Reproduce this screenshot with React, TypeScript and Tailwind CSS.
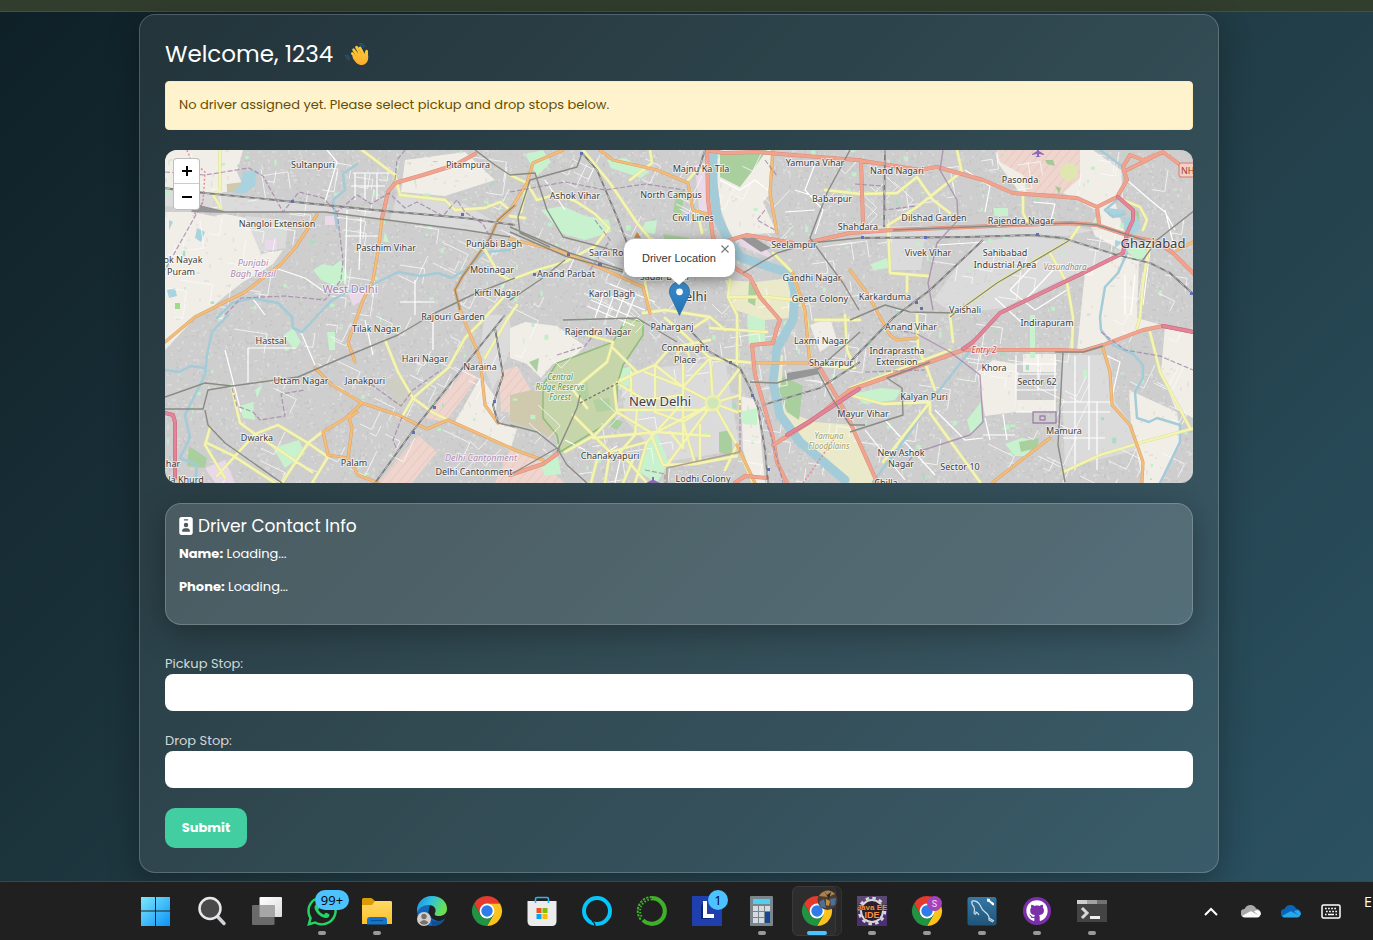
import type { ReactNode } from "react";
import { FaIdBadge } from "react-icons/fa6";
import { FaWhatsapp, FaGithub } from "react-icons/fa";

const noise = (() => {
  let seed = 20240611;
  const rnd = () => {
    seed = (seed * 1664525 + 1013904223) % 4294967296;
    return seed / 4294967296;
  };
  let dark = "";
  let light = "";
  let streets = "";
  let sand = "";
  for (let i = 0; i < 11000; i++) {
    const x = Math.round(rnd() * 1028);
    const y = Math.round(rnd() * 333);
    const l = 1 + Math.round(rnd() * 3);
    const seg = `M${x} ${y}${rnd() > 0.5 ? "h" : "v"}${l}`;
    if (i % 2 === 0) light += seg;
    else dark += seg;
  }
  for (let i = 0; i < 1100; i++) {
    const x = Math.round(rnd() * 1028);
    const y = Math.round(rnd() * 333);
    sand += `M${x} ${y}${rnd() > 0.5 ? "h" : "v"}${2 + Math.round(rnd() * 3)}`;
  }
  for (let i = 0; i < 260; i++) {
    const x = Math.round(rnd() * 1028);
    const y = Math.round(rnd() * 333);
    const a = Math.round((x / 260 + y / 200) % 3) * 0.3 - 0.15;
    const l = 10 + rnd() * 24;
    const b = rnd() > 0.5 ? a : a + Math.PI / 2;
    const c = b + Math.PI / 2;
    streets += `M${x} ${y}l${(Math.cos(b) * l).toFixed(1)} ${(Math.sin(b) * l).toFixed(1)}`;
    streets += `l${(Math.cos(c) * l * 0.6).toFixed(1)} ${(Math.sin(c) * l * 0.6).toFixed(1)}`;
  }
  const parks: { x: number; y: number; w: number; h: number }[] = [];
  for (let i = 0; i < 240; i++) {
    parks.push({ x: rnd() * 1020, y: rnd() * 330, w: 1 + rnd() * 4, h: 1 + rnd() * 5 });
  }
  return { dark, light, streets, sand, parks };
})();

const openLand = [
  "M0 0H78L72 22 80 40 60 42 48 44 30 40 0 38Z",
  "M0 62H26L48 66 60 64 92 70 96 104 118 100 108 114 92 124 78 132 60 146 44 160 30 168 0 200Z",
  "M548 0H606L604 45 598 52 612 83 585 84 566 88 556 60Z",
  "M832 0H928L956 20 958 48 934 62 912 50 898 43 855 43 832 12Z",
  "M934 62L950 52 960 84 956 100 930 86 926 76Z",
  "M858 204H891V222H858ZM852 250H890V262H852Z",
  "M920 122L962 104 974 110 972 168 1000 176 960 186 938 194 912 200Z",
  "M1000 176L1028 182V268L1010 258 996 222Z",
  "M964 240L1012 262 1016 290 996 333H978L966 275Z",
  "M345 178L360 172 392 176 420 196 410 206 388 214 376 228 362 214 345 208Z",
  "M316 226L332 250 330 272 352 279 345 300 290 272Z",
  "M812 222L828 210 852 214 850 262 820 266Z",
  "M576 246L592 250 600 333H588L578 300Z",
  "M240 10L300 2 330 30 280 46 236 42Z",
  "M645 175L665 168 672 190 655 202Z",
];

const greyLand = [
  "M0 40L120 52 218 62 216 70 160 62 60 61 30 58 0 56Z",
  "M80 66L124 70 120 98 95 102Z",
  "M810 92L858 86 898 90 952 106 900 128 838 158 790 164 768 150Z",
  "M233 42L300 54 330 72 320 84 225 70Z",
  "M696 76L905 76 930 80 902 86 800 86 698 86Z",
  "M720 84L760 86 756 120 726 120Z",
  "M896 205H945L950 252 968 276 972 300 900 318Z",
  "M320 165H345V200L328 240 314 205Z",
  "M455 222L560 210 575 300 500 312 460 270Z",
];

const pinkLand = [
  "M832 0H915V28L898 43H862L858 25 835 12Z",
  "M300 219L313 228 280 272 260 268Z",
  "M253 285L272 302 247 333H213Z",
  "M334 222L352 216 368 244 352 262 336 262Z",
  "M345 300L376 312 400 333H330Z",
];

const lightGreen = [
  "M148 120L158 114 168 116 176 110 180 120 184 128 170 136 156 130Z",
  "M376 60L398 56 420 66 444 70 446 82 420 90 398 84Z",
  "M360 4L378 0 386 12 372 26Z",
  "M442 10L460 8 484 22 476 28 446 18Z",
  "M108 298L134 290 140 304 120 318Z",
  "M482 290L492 284 504 312 492 333 474 322Z",
  "M582 165H600V195H584Z",
  "M574 262L592 258 592 275 578 274Z",
  "M686 244L716 238 736 240 730 250 700 254Z",
  "M840 294L856 288 870 290 862 306 850 306Z",
  "M962 100L975 94 986 106 970 110Z",
  "M452 220L466 216 466 234 454 240Z",
  "M802 270L816 252 818 270 806 284Z",
  "M480 72L492 70 490 84 476 82Z",
  "M374 312L392 302 396 324 380 326Z",
  "M90 240L98 234 92 248ZM74 256L88 252 90 270 78 268Z",
  "M128 178L136 192 130 200 118 186ZM162 182H170V200H164ZM220 82L224 92 218 92ZM706 114L722 108 724 118 708 120ZM828 58H843V66H830ZM918 220H922V228H918ZM865 165H870V208H865Z",
];

const midGreen = [
  "M555 2L602 0 588 20 575 37 555 27Z",
  "M512 42L520 40 516 66 508 62Z",
  "M498 84L524 88 530 98 502 96Z",
  "M554 282L566 280 568 308 554 302Z",
  "M964 57L974 62 974 72 968 68Z",
  "M854 292L874 288 872 298 856 302Z",
  "M24 296L42 308 40 318 22 316Z",
  "M448 268L458 272 452 280 444 276Z",
  "M364 212L374 208 372 222Z",
];

const river = "M548 -4L548 33 552 67 562 87 575 107 605 117 625 123 630 143 628 170 612 198 608 232 615 265 635 292 680 330";

const streams = [
  "M63 165L47 182 42 205 40 225 20 265 25 288 15 308 32 315 30 333",
  "M0 220L14 222 26 216 40 218",
  "M52 168L67 153 87 148 113 153 127 167 128 178 137 182 153 165 167 150 187 140 207 135 233 122 255 126 273 123 287 128 300 120 320 102 345 100",
  "M172 78L168 50 180 40 178 24 192 14",
  "M935 0L958 17 960 33 952 50 940 60 948 67 960 64",
  "M962 103L953 123 940 137 935 167 936 180 948 195 968 204 978 215 978 228 970 242 972 268 984 272 992 268 1015 275 1015 292 995 333",
  "M808 197L765 252 738 292 708 332",
];

const yellowRoads = [
  "M55 0V40L48 45 56 58",
  "M197 0L230 25 235 45 280 50 290 60 320 58 335 52 345 60",
  "M418 0L445 33 472 73 492 97",
  "M485 0L487 13 465 30",
  "M523 30L530 22 545 18",
  "M532 60L537 83",
  "M608 103L628 123 642 170 645 215",
  "M345 25L362 33 372 50 392 44 412 52 430 64 444 78 430 96 400 112 372 120 345 130",
  "M360 68L345 66M362 33L356 62",
  "M792 0L797 23",
  "M660 40L696 44 732 43 752 27 768 50 785 63",
  "M725 123L723 75 752 57 795 23",
  "M858 45V63L863 73",
  "M915 75L905 90 870 110 832 133 785 167",
  "M958 50L975 57 982 70 978 80",
  "M985 90L978 133 975 167 972 178",
  "M885 103L902 133 908 167 907 198",
  "M725 123L763 126M742 126V142",
  "M685 245L718 254 765 252",
  "M765 252L765 263 815 332",
  "M752 165L753 198 762 218 770 240",
  "M718 312L765 252",
  "M785 165L788 192M685 238L785 200",
  "M898 322L935 305 978 292 1030 278",
  "M985 182L995 222 1025 278",
  "M67 238L75 273 90 284 113 275 143 293 163 307 147 333",
  "M45 278L40 295 60 328M42 293L67 305 110 333",
  "M90 284L52 326M90 284L147 322M157 282L143 293 117 333",
  "M220 190L233 222 248 248 267 262 283 270",
  "M237 267L248 248 283 218 300 188 316 172 345 140",
  "M320 208L343 168 352 155",
  "M320 100L334 124 345 130",
  "M400 302L430 285 452 262 449 235 472 222 448 198",
  "M408 265L445 302 440 333",
  "M422 258L408 240 442 212 448 192 422 185",
  "M452 260H548M518 237L548 253M518 212V298M518 237L545 208M548 253L545 208M548 253L575 218M548 253L575 245",
  "M548 253L572 262M548 253L572 295M548 253L502 315M518 237L490 215 455 230M490 215L505 198 545 190",
  "M492 282L548 253M482 292L518 252M452 262L485 282 498 315 530 314 572 306",
  "M455 235L480 250 518 245M518 237L480 222M518 272L490 262M492 282L545 286M530 314L518 272 548 253",
  "M428 288L492 282M445 302L482 292M466 245V222M472 260L470 285 455 302M535 312V275M572 295L560 320M575 225V262",
  "M490 215V262M455 302L482 333M434 302L426 333M482 292L470 333M518 298L505 282",
  "M572 165V215M545 178L602 182M525 180L545 167M500 168L520 185 545 208 588 213",
  "M478 163L500 160 545 167 560 180",
  "M565 130L563 147 572 165M563 147L602 147 630 150",
  "M492 97L480 132 485 163",
  "M680 165L682 200 690 218M645 215L690 218M650 170H695",
  "M458 333L470 305M572 295L588 333",
];

const orangeRoads = [
  "M0 192L30 167 80 142 115 115 130 98 152 65",
  "M217 68L214 95 208 130 198 150 192 167 183 192 190 212",
  "M150 218L167 235 197 253 233 265 262 279 283 270 350 300 378 310",
  "M197 253L182 267 158 282 163 305 183 308 187 278 184 268 192 262",
  "M183 308L193 325 213 333",
  "M435 0L448 10 492 20 523 33 528 60 545 65",
  "M398 0L368 13 362 33 345 60 333 72",
  "M345 89L395 101 445 122 478 137 485 163",
  "M588 213H645",
  "M937 195L945 222 947 255 965 275 978 312 977 332",
  "M828 332L885 288",
  "M608 0L605 43 612 83",
  "M685 120L702 143 715 167 725 185 732 190 752 188",
  "M628 123L640 160 645 215",
  "M1028 92L1012 100",
  "M350 55L333 70 325 88 297 127 290 140 295 160 300 172 315 208 320 255 333 273",
  "M572 295L590 333",
];

const salmonRoads = [
  "M310 4L290 15 258 25 230 33 223 42 217 68",
  "M542 0L543 50 548 88 568 117 585 127 595 147 615 170 612 178 608 193 587 195 590 225 598 252 608 288 612 312 622 333",
  "M542 0L558 3 592 2 628 5 692 10 755 20 772 17 818 30 848 43 912 48 932 57 952 47 962 30 958 17 965 5 978 10 998 2 1018 17",
  "M962 20L998 2M932 57L934 73M696 10L698 73",
  "M548 98L565 90 582 85 628 93M685 83L728 80 905 73 932 75 968 87 992 92 1008 103 1030 125",
  "M685 83L645 92",
  "M645 213L655 218 678 258 685 272 712 332",
  "M798 200H892L918 201 938 195 978 180 998 176 1030 182",
  "M798 200L765 212 685 240 645 272 608 295",
  "M345 325L378 314 392 304",
  "M570 333L580 326 602 328",
];

const pinkRoads = [
  "M953 47L968 60 968 70 962 83 958 103 918 123 835 163 808 192 798 199",
  "M0 263L8 265 10 272V328",
  "M694 239L645 271 622 285",
  "M998 176L1028 182",
];

const railGrey = [
  "M30 55L60 62 160 62 230 71 300 80 345 87",
  "M310 0L330 15 345 25 370 23 382 60 398 87 448 100",
  "M417 3L412 17 365 30 353 67 355 83 385 97",
  "M345 77L405 103 458 120M345 82L400 106 458 122",
  "M350 128L307 145 270 163 233 185 177 208 133 227 67 236 40 233 0 247",
  "M0 259H38L43 240 67 236M40 260L43 275 60 293 117 333",
  "M685 0L662 43 645 88 678 133 694 160",
  "M578 123L612 103 645 93 695 88",
  "M728 80L905 73 932 75 985 92",
  "M345 150L375 130 400 110",
  "M1030 60L992 90 978 110",
  "M898 202L893 295 900 332M890 202L918 202 938 196",
  "M685 282L738 265 737 238 722 228 765 212",
  "M345 275L372 282 392 298 402 315 422 333M392 298L345 325",
  "M398 170L472 168 512 192M392 302L412 258 415 245",
  "M585 232L612 233 652 220 695 182",
  "M350 55L333 70 325 88 297 127 290 140 295 160",
  "M333 273L350 277M330 178L338 225 328 255 333 273",
  "M905 90L832 133 785 167",
  "M685 170L720 155 745 162 790 163",
  "M652 220L668 250 685 275 700 275",
];

const railDark = [
  "M0 38L20 41 120 51 220 61 300 68 350 75",
  "M417 3L432 20 452 67 462 93",
  "M340 165L300 215 247 282 210 333",
  "M695 88L802 87 868 85 898 88 952 105 985 113 1005 123 1027 143",
  "M818 90L765 140 728 168 685 212",
  "M720 0L719 77",
  "M525 180L545 202 575 218 585 238 593 258 600 300 603 333",
  "M598 255L655 238 695 212",
  "M540 0L532 25",
  "M330 178L338 225 328 255 333 273",
];

const borders = [
  "M0 22L40 25 84 18 98 26 118 62 134 42 158 48 172 62 192 45 206 54 224 43 240 58 252 52 278 66 292 50 300 62 318 74 330 96",
  "M345 42L400 32 440 40 480 34 520 40",
  "M172 62L178 110 176 130 160 150 120 146 76 148 60 165",
  "M38 52L0 120",
  "M230 30L232 10 240 0",
  "M67 238L72 256 88 262 95 270 120 266 116 244 140 240",
  "M237 267L228 290 232 300",
  "M200 230L236 256 248 240 276 220",
  "M690 34L718 36 720 60 750 56",
  "M732 180L752 184M752 302L735 320",
  "M600 10L612 26M600 60L592 70 610 80",
  "M936 182L960 200 995 206 1028 220",
  "M425 120L445 90 430 70",
  "M392 205L420 196 432 180",
  "M700 222L760 220",
  "M592 250L606 285 618 333",
  "M480 320L500 324 500 333M575 302L575 250",
];

type MapLabel = { t: string; x: number; y: number; city?: boolean };
const labels: MapLabel[] = [
  { t: "Sultanpuri", x: 148, y: 18 },
  { t: "Pitampura", x: 303, y: 18 },
  { t: "Nangloi Extension", x: 112, y: 77 },
  { t: "Paschim Vihar", x: 221, y: 101 },
  { t: "Punjabi Bagh", x: 329, y: 97 },
  { t: "Motinagar", x: 327, y: 123 },
  { t: "Kirti Nagar", x: 332, y: 146 },
  { t: "ok Nayak", x: 18, y: 113 },
  { t: "Puram", x: 16, y: 125 },
  { t: "Rajouri Garden", x: 288, y: 170 },
  { t: "Tilak Nagar", x: 211, y: 182 },
  { t: "Hastsal", x: 106, y: 194 },
  { t: "Hari Nagar", x: 260, y: 212 },
  { t: "Naraina", x: 315, y: 220 },
  { t: "Uttam Nagar", x: 136, y: 234 },
  { t: "Janakpuri", x: 200, y: 234 },
  { t: "Dwarka", x: 92, y: 291 },
  { t: "Palam", x: 189, y: 316 },
  { t: "Delhi Cantonment", x: 309, y: 325 },
  { t: "har", x: 8, y: 317 },
  { t: "la Khurd", x: 21, y: 333 },
  { t: "Majnu Ka Tila", x: 536, y: 22 },
  { t: "Yamuna Vihar", x: 650, y: 16 },
  { t: "Ashok Vihar", x: 410, y: 49 },
  { t: "North Campus", x: 506, y: 48 },
  { t: "Civil Lines", x: 528, y: 71 },
  { t: "Babarpur", x: 667, y: 52 },
  { t: "Shahdara", x: 693, y: 80 },
  { t: "Seelampur", x: 629, y: 98 },
  { t: "Sarai Rohilla", x: 450, y: 106 },
  { t: "Sadar Bazar", x: 500, y: 130 },
  { t: "Anand Parbat", x: 401, y: 127 },
  { t: "Karol Bagh", x: 447, y: 147 },
  { t: "Gandhi Nagar", x: 647, y: 131 },
  { t: "Geeta Colony", x: 655, y: 152 },
  { t: "Nand Nagari", x: 732, y: 24 },
  { t: "Pasonda", x: 855, y: 33 },
  { t: "Dilshad Garden", x: 769, y: 71 },
  { t: "Rajendra Nagar", x: 856, y: 74 },
  { t: "Vivek Vihar", x: 763, y: 106 },
  { t: "Sahibabad", x: 840, y: 106 },
  { t: "Industrial Area", x: 840, y: 118 },
  { t: "Karkarduma", x: 720, y: 150 },
  { t: "Vaishali", x: 800, y: 163 },
  { t: "Rajendra Nagar", x: 433, y: 185 },
  { t: "Paharganj", x: 507, y: 180 },
  { t: "Connaught", x: 520, y: 201 },
  { t: "Place", x: 520, y: 213 },
  { t: "Laxmi Nagar", x: 656, y: 194 },
  { t: "Shakarpur", x: 666, y: 216 },
  { t: "Anand Vihar", x: 746, y: 180 },
  { t: "Indraprastha", x: 732, y: 204 },
  { t: "Extension", x: 732, y: 215 },
  { t: "Indirapuram", x: 882, y: 176 },
  { t: "Khora", x: 829, y: 221 },
  { t: "Sector 62", x: 872, y: 235 },
  { t: "Kalyan Puri", x: 759, y: 250 },
  { t: "Mayur Vihar", x: 698, y: 267 },
  { t: "Mamura", x: 899, y: 284 },
  { t: "New Ashok", x: 736, y: 306 },
  { t: "Nagar", x: 736, y: 317 },
  { t: "Sector 10", x: 795, y: 320 },
  { t: "Chilla", x: 721, y: 336 },
  { t: "Chanakyapuri", x: 445, y: 309 },
  { t: "Lodhi Colony", x: 538, y: 332 },
  { t: "Delhi", x: 526, y: 151, city: true },
  { t: "New Delhi", x: 495, y: 256, city: true },
  { t: "Ghaziabad", x: 988, y: 98, city: true },
];

const italics = [
  { t: "Punjabi", x: 88, y: 116, c: "#b08bb4", s: 9 },
  { t: "Bagh Tehsil", x: 88, y: 127, c: "#b08bb4", s: 9 },
  { t: "Delhi Cantonment", x: 316, y: 311, c: "#b08bb4", s: 9 },
  { t: "Central", x: 395, y: 230, c: "#4f9a4c", s: 8 },
  { t: "Ridge Reserve", x: 395, y: 240, c: "#4f9a4c", s: 8 },
  { t: "Forest", x: 395, y: 250, c: "#4f9a4c", s: 8 },
  { t: "Yamuna", x: 664, y: 289, c: "#a09f62", s: 8 },
  { t: "Floodplains", x: 664, y: 299, c: "#a09f62", s: 8 },
  { t: "Vasundhara", x: 900, y: 120, c: "#8c8c8c", s: 8 },
  { t: "Entry 2", x: 819, y: 203, c: "#c8465a", s: 8 },
];

function Roads({ d, casing, fill, w }: { d: string[]; casing: string; fill: string; w: number }) {
  return (
    <g fill="none" strokeLinejoin="round" strokeLinecap="round">
      <path d={d.join("")} stroke={casing} strokeWidth={w + 1} />
      <path d={d.join("")} stroke={fill} strokeWidth={w} />
    </g>
  );
}

function CityMap() {
  return (
    <svg viewBox="0 0 1028 333" preserveAspectRatio="xMidYMid slice" className="block h-full w-full" role="img" aria-label="Map of Delhi">
      <defs>
        <pattern id="hatch" width="7" height="7" patternUnits="userSpaceOnUse" patternTransform="rotate(40)">
          <path d="M0 0V7" stroke="#e6b9b2" strokeWidth="1" />
        </pattern>
      </defs>
      <rect width="1028" height="333" fill="#cecece" />
      <path d={noise.dark} stroke="#c2c2c2" fill="none" />
      <path d={noise.light} stroke="#e0e0df" fill="none" />
      <path d={openLand.join("")} fill="#f1eee8" />
      <path d={greyLand.join("")} fill="#dbdbdb" />
      <path d={noise.sand} stroke="#cfccc8" strokeWidth="1" opacity=".6" fill="none" />
      <path d={pinkLand.join("")} fill="#eed6cf" />
      <path d={pinkLand.join("")} fill="url(#hatch)" />
      <path d="M345 245L375 238 390 290 372 280 345 272ZM62 34L78 32 76 42 62 42Z" fill="#cfc9ae" />
      <path d="M222 230L240 226 244 248 236 256 222 240Z" fill="#d0cebf" opacity=".8" />
      <path d="M182 140L206 134 200 148 188 156ZM100 90L112 90 112 100 100 100ZM160 66L170 66 170 75 160 75ZM530 15L542 12 543 62 534 60ZM610 110L575 96 572 88 600 98ZM50 333L40 318 60 310 70 333Z" fill="#ead9e8" />
      {noise.parks.map((p, i) => (
        <rect key={i} x={p.x} y={p.y} width={p.w} height={p.h} fill={i % 6 === 0 ? "#a9dcc0" : "#c0f0c8"} />
      ))}
      <path d={lightGreen.join("")} fill="#c8f2cd" />
      <path d={midGreen.join("")} fill="#aacf9f" />
      <path d="M618 205L616 250 622 262 650 272 690 275 712 333H684L640 294 612 262 604 232 606 205ZM560 130L590 132 625 128 626 168 600 170 570 160Z" fill="#eae9c9" />
      <path d="M584 132L592 134 590 156 583 152ZM618 226L638 236 634 270 622 262 614 240Z" fill="#aacf9f" />
      <path d="M378 235L392 213 422 202 448 192 462 168 478 172 478 185 458 215 452 235V262L435 278 395 302 392 285 378 268Z" fill="#c7d5aa" stroke="#8dbd77" strokeWidth="1.5" />
      <path d="M412 240L422 232 424 246 414 258ZM428 250L444 248 446 260 432 262Z" fill="#b1d2a0" />
      <circle cx="904" cy="22" r="9" fill="#dfe6b0" />
      <path d="M880 10L888 10 890 16 882 14ZM890 36L896 38 894 44Z" fill="#a5c894" />
      <path d="M78 22L92 20 90 36 78 44 68 42 76 34ZM2 140L10 138 12 146 4 148ZM32 78L40 82 36 92 30 88ZM4 70L8 72 4 80ZM958 68L972 66 976 78 966 86 960 82ZM942 58L960 60 956 68 944 66ZM950 90L958 92 950 98Z" fill="#a9d3de" />
      <path d="M10 153H15V159H10Z" fill="#9fdc8a" />
      <path d={noise.streets} fill="none" stroke="#fbfbfb" strokeWidth=".9" opacity=".85" />
      <path
        fill="none"
        stroke="#fff"
        strokeWidth="1.2"
        d="M851 205V262L890 262V205M851 214H892M851 224H892M851 240H892M873 205V240M162 0L172 12 160 52M188 23H230M190 23V50M200 23V50M212 23V50M186 36H220M182 60L180 134M196 66L194 120M180 86H214M110 118L140 128 160 142M88 149L100 165M136 182L150 215M83 198H130M83 198L83 232M60 200L76 262M200 170L208 205M235 152H270M250 130V165M268 165V200M380 30L400 60M440 140L430 168M450 142L440 170M460 144L450 170M430 140L480 160M426 150L474 170M422 156L470 176M445 134L490 152M470 146L458 176M910 206V320M924 206V300M932 252V320M896 252H945M896 262H945M898 288H940M700 280L740 330M720 270L770 325M740 292L720 306M770 260L800 290 818 288M820 268L825 290M838 264L842 290M818 285H850M985 100L978 155M960 125V165M970 125L966 165M1000 60L1010 100M868 52L890 54 886 70M800 20L825 36 820 62M772 95L820 92M845 140L875 108M860 150L890 118M870 160L905 138M845 140L870 160M830 148L856 172M650 14L640 40 658 60 650 84M630 40L660 50M620 62L650 60M555 30L575 40 590 30 603 40M940 205L955 212 945 255M962 30L985 50 1000 62 1010 80M400 290L420 300M430 310L452 296M455 310L450 333"
      />
      <g fill="none" stroke="#a3cbd8" strokeLinejoin="round" strokeLinecap="round">
        <path d={river} strokeWidth="9" />
        <path d={streams.join("")} strokeWidth="2.5" />
      </g>
      <Roads d={yellowRoads} casing="#dfdf9d" fill="#f4f5b2" w={2.3} />
      <Roads d={orangeRoads} casing="#d9a566" fill="#f5bd7c" w={2.2} />
      <Roads d={salmonRoads} casing="#dc8c78" fill="#f0a48f" w={3} />
      <Roads d={pinkRoads} casing="#c9667e" fill="#e18598" w={3} />
      <g fill="none" strokeLinejoin="round">
        <path d={railGrey.join("")} stroke="#8b8b85" strokeWidth="1.4" />
        <path d={railDark.join("")} stroke="#7d7d7d" strokeWidth="1.8" />
        <path d={railDark.join("")} stroke="#c9c9c9" strokeWidth=".9" strokeDasharray="5 5" />
        <path d={borders.join("")} stroke="#a183a8" strokeWidth="1.2" strokeDasharray="5 2" opacity=".8" />
        <path d="M778 0L775 20 792 50 793 70 772 93 763 133 768 160M752 184L785 202 815 225 818 272 805 285 752 302" stroke="#a183a8" strokeWidth="1.4" opacity=".75" />
        <path d="M868 262H891V273H868ZM875 266H880V270H875Z" stroke="#a183a8" strokeWidth="1.4" />
        <path d="M575 302L502 318V333" stroke="#b0a28a" strokeWidth="1.5" />
        <path d="M415 253L455 232" stroke="#777" strokeDasharray="3 2" strokeWidth="1.3" />
        <path d="M22 0L26 10 40 22 38 52 28 66M638 333L672 285" stroke="#e58a98" strokeWidth="1.5" strokeDasharray="2 2" />
      </g>
      <path d="M30 54L50 60 60 63 26 62ZM576 88L590 88 606 98 596 102 584 94ZM622 223L652 218 654 224 622 231Z" fill="#969696" />
      <g fill="none" stroke="#eef0a8" strokeWidth="2.5">
        <circle cx="548" cy="253" r="7" fill="#cfe6bb" />
        <circle cx="518" cy="206" r="6" />
      </g>
      <path d="M126 50h3v3h-3zM296 63h3v3h-3zM415 2h3v3h-3zM402 103h3v3h-3zM433 113h4v3h-4zM368 123h3v3h-3zM328 250h3v3h-3zM268 256h3v3h-3zM247 281h3v3h-3zM696 86h3v3h-3zM759 86h3v3h-3zM871 83h3v3h-3zM564 211h3v3h-3zM586 244h3v3h-3zM602 318h3v3h-3zM750 151h3v3h-3zM755 157h3v3h-3zM1025 142h3v3h-3z" fill="#6470b4" />
      <path d="M472 82L476 88H469Z" fill="#d08544" />
      <g fill="#8c6ab8">
        <path d="M872 -3h2v4l5 3v1l-5-1v2l2 1h-6l2-1V4l-5 1V4l5-3z" />
        <path d="M487 327h2v3l6 3H481l6-3z" />
      </g>
      <rect x="1014" y="13" width="20" height="14" rx="2" fill="#f3cfc4" stroke="#d97a66" />
      <text x="1016" y="24" fontSize="9" fill="#a0432f" fontFamily="Noto Sans, sans-serif">NH</text>
      <g fontFamily="Noto Sans, sans-serif" textAnchor="middle" stroke="#ffffff" strokeOpacity=".6" strokeWidth="2" strokeLinejoin="round" paintOrder="stroke">
        {italics.map((l) => (
          <text key={l.t + l.x} x={l.x} y={l.y} fontSize={l.s} fontStyle="italic" fill={l.c}>{l.t}</text>
        ))}
        <text x="185" y="143" fontSize="11" fill="#a986b0">West Delhi</text>
        {labels.map((l) => (
          <text key={l.t + l.x} x={l.x} y={l.y} fontSize={l.city ? 13 : 9} fill="#404040">{l.t}</text>
        ))}
      </g>
    </svg>
  );
}

function Marker() {
  return (
    <svg viewBox="0 0 25 41" className="h-[35px] w-[21px]" aria-hidden="true">
      <defs>
        <linearGradient id="pin" x1="0" y1="0" x2="0" y2="1">
          <stop offset="0" stopColor="#3d8fd0" />
          <stop offset="1" stopColor="#1f6fb2" />
        </linearGradient>
      </defs>
      <path d="M12.5.6C5.9.6.6 5.9.6 12.5c0 2.300.7 4.500 2 6.800L12.500 40.500l9.900-21.200c1.300-2.300 2-4.500 2-6.800C24.400 5.900 19.100.6 12.500.6Z" fill="url(#pin)" stroke="#2a6da3" />
      <circle cx="12.500" cy="12.500" r="4" fill="#fff" />
    </svg>
  );
}

function WavingHand() {
  return (
    <svg viewBox="0 0 24 24" className="h-6 w-6" role="img" aria-label="Waving hand">
      <defs>
        <linearGradient id="skin" x1="0" y1="0" x2="0" y2="1">
          <stop offset="0" stopColor="#ffc83a" />
          <stop offset="1" stopColor="#f9ab2f" />
        </linearGradient>
      </defs>
      <g fill="none" stroke="#1a6fa8" strokeWidth=".8" strokeLinecap="round">
        <path d="M14.500 1.500Q18 .3 20 4.500M15.500 3.300Q17.500 3 18.500 5.200M.8 13Q.6 16.500 4.200 18M2.800 13.500Q2.900 15.500 4.600 16.300" />
      </g>
      <g stroke="#ffc83a" strokeWidth="2.800" strokeLinecap="round" fill="none">
        <path d="M13.500 14L8.600 7.800M15.500 12L11.600 5.200M18 12L15 6M12 16L7.400 11.500" />
      </g>
      <path d="M8.500 12.500L17.500 8.500 19.500 12C20 9.500 20.500 7.300 22 7.800 23.500 8.300 23 10.500 23 12.500 24 17.500 22 22.500 17.500 23 13.500 23.500 10.500 20.500 8 16.500 7 14.500 7.500 13 8.500 12.500Z" fill="url(#skin)" />
      <path d="M10 7.800L13.300 12M13 6.700L16 11M8.800 11.200L11.500 14" stroke="#e59600" strokeWidth=".6" fill="none" />
    </svg>
  );
}

function Svg({ children }: { children: ReactNode }) {
  return (
    <svg viewBox="0 0 30 30" className="h-[30px] w-[30px] overflow-visible" aria-hidden="true">
      {children}
    </svg>
  );
}

function Chrome({ children }: { children?: ReactNode }) {
  return (
    <Svg>
      <path d="M2 7.500A15 15 0 0 1 28 7.500H15L8.500 18.750Z" fill="#e33b2e" />
      <path d="M28 7.500A15 15 0 0 1 15 30L21.500 18.750 15 7.500Z" fill="#fcc31e" />
      <path d="M15 30A15 15 0 0 1 2 7.500L8.500 18.750H21.500Z" fill="#229342" />
      <circle cx="15" cy="15" r="7.400" fill="#fff" />
      <circle cx="15" cy="15" r="5.700" fill="#2f7bea" />
      {children}
    </Svg>
  );
}

type TaskbarApp = { name: string; icon: ReactNode; running?: boolean; active?: boolean; badge?: string };
const apps: TaskbarApp[] = [
  {
    name: "Start",
    icon: (
      <Svg>
        <defs>
          <linearGradient id="win" gradientUnits="userSpaceOnUse" x1="0" y1="0" x2="29" y2="30">
            <stop offset="0" stopColor="#7ce8fd" />
            <stop offset="1" stopColor="#0a90f5" />
          </linearGradient>
        </defs>
        <path d="M-1 1H13V14.500H-1ZM14 1H28V14.500H14ZM-1 15.500H13V30H-1ZM14 15.500H28V30H14Z" fill="url(#win)" />
      </Svg>
    ),
  },
  {
    name: "Search",
    icon: (
      <Svg>
        <path d="M20 20L27 27.500" stroke="#cfd3d8" strokeWidth="3.500" strokeLinecap="round" />
        <circle cx="13" cy="12.500" r="10.500" fill="#4a4a4a" stroke="#e8e8ea" strokeWidth="2.500" />
      </Svg>
    ),
  },
  {
    name: "Task view",
    icon: (
      <Svg>
        <defs>
          <linearGradient id="tv" x1="0" y1="0" x2="1" y2="1">
            <stop offset="0" stopColor="#fff" />
            <stop offset="1" stopColor="#dcdcdc" />
          </linearGradient>
        </defs>
        <rect x="7.500" y="1" width="22.500" height="20" rx="1" fill="url(#tv)" />
        <rect x="0" y="9" width="22.500" height="20" rx="1" fill="#6a6a6a" />
        <rect x="7.500" y="9" width="15" height="12" fill="#a6a6a6" />
      </Svg>
    ),
  },
  { name: "WhatsApp", running: true, badge: "99+", icon: <FaWhatsapp className="h-[34px] w-[34px] text-[#25d366]" /> },
  {
    name: "File Explorer",
    running: true,
    icon: (
      <Svg>
        <defs>
          <linearGradient id="fold" x1="0" y1="0" x2="0" y2="1">
            <stop offset="0" stopColor="#ffd965" />
            <stop offset="1" stopColor="#fbbf2b" />
          </linearGradient>
        </defs>
        <path d="M0 3.500Q0 2 1.500 2H9.500L13 5H28.500Q30 5 30 6.500V12H0Z" fill="#dd9a07" />
        <path d="M0 9H10L13 5H28.500Q30 5 30 6.500V28H0Z" fill="url(#fold)" />
        <path d="M5 28.500V24Q5 21 8 21H22Q25 21 25 24V28.500Z" fill="#1276cf" />
        <path d="M9 24.500H21" stroke="#0b4f94" strokeWidth="1.200" />
      </Svg>
    ),
  },
  {
    name: "Microsoft Edge",
    icon: (
      <Svg>
        <defs>
          <linearGradient id="edge" x1="0" y1="0" x2="1" y2=".3">
            <stop offset="0" stopColor="#1a8fd8" />
            <stop offset=".5" stopColor="#2fc2df" />
            <stop offset="1" stopColor="#6be04e" />
          </linearGradient>
        </defs>
        <path d="M15 0A15 15 0 0 0 0 15Q1 30 16 30 24 30 28 23 22 27 16 23 10 18 12 13Z" fill="#1467bd" />
        <path d="M0 13A15 14 0 0 1 15 0C24 0 30 6 30 12.500 30 18 26 20 22 20 18 20 17 18.500 18 17 20 13 17 9 12 9 6 9 2 12 0 16Z" fill="url(#edge)" />
        <path d="M14 24Q22 28 28 22 24 30 15 30Z" fill="#0f4f95" />
        <circle cx="7" cy="23" r="7" fill="#d3cfca" />
        <circle cx="7" cy="20.500" r="2.700" fill="#77716c" />
        <path d="M2.500 26.500Q7 21.500 11.500 26.500 7 31 2.500 26.500Z" fill="#77716c" />
      </Svg>
    ),
  },
  { name: "Google Chrome", icon: <Chrome /> },
  {
    name: "Microsoft Store",
    icon: (
      <Svg>
        <path d="M0.500 5H29.500V25Q29.500 30 25 30H5Q.5 30 .5 25Z" fill="#ececec" />
        <path d="M8.500 7V3Q8.500 1.500 10 1.500H20Q21.500 1.500 21.500 3V7" fill="none" stroke="#35b0ee" strokeWidth="1.600" />
        <path d="M9.500 12h5v5h-5z" fill="#f1511b" />
        <path d="M15.500 12h5v5h-5z" fill="#80bc06" />
        <path d="M9.500 18h5v5h-5z" fill="#05a6f0" />
        <path d="M15.500 18h5v5h-5z" fill="#fbb90a" />
      </Svg>
    ),
  },
  {
    name: "Alexa",
    icon: (
      <Svg>
        <circle cx="15" cy="15" r="13" fill="none" stroke="#06c5fb" strokeWidth="4" />
        <path d="M10 25Q13 26.500 13 30" stroke="#202020" strokeWidth="1.200" fill="none" />
      </Svg>
    ),
  },
  {
    name: "Anaconda Navigator",
    icon: (
      <Svg>
        <path d="M15 2.200A12.800 12.800 0 0 1 15 27.800Q9 27.500 6 24" fill="none" stroke="#3fb02a" strokeWidth="4.200" />
        <path d="M15 1A14 14 0 0 0 4 24" fill="none" stroke="#3fb02a" strokeWidth="2" strokeDasharray="2.400 1.200" />
        <path d="M15 3.500A11.500 11.500 0 0 0 5.500 22" fill="none" stroke="#3fb02a" strokeWidth="2" strokeDasharray="1.500 1.700" />
      </Svg>
    ),
  },
  {
    name: "Lens",
    badge: "1",
    icon: (
      <Svg>
        <path d="M0 0H30V30H0Z" fill="#1f3fae" />
        <path d="M9 10L12 5V19H21L19 23H9Z" fill="#0b2470" />
        <path d="M11 5H15V18H22V22H11Z" fill="#fff" />
      </Svg>
    ),
  },
  {
    name: "Calculator",
    running: true,
    icon: (
      <Svg>
        <rect x="3" y="0" width="23" height="30" rx="1" fill="#7b858e" />
        <rect x="6" y="3" width="17" height="5" fill="#4fd0ee" />
        <path d="M6 10h5v5H6zM12 10h5v5h-5zM18 10h5v5h-5zM6 16h5v5H6zM12 16h5v5h-5zM6 22h5v5H6zM12 22h5v5h-5z" fill="#d6dbe2" />
        <path d="M18 16h5v11h-5z" fill="#14498f" />
      </Svg>
    ),
  },
  {
    name: "Google Chrome, work window",
    active: true,
    icon: (
      <Chrome>
        <circle cx="25.500" cy="4" r="10" fill="#4b3d34" />
        <path d="M17 0Q20-5 26-5.500Q31-5 33-2L26 1Z" fill="#a98149" />
        <path d="M22-5L25-1 29-4 27 3Z" fill="#2a2420" />
        <path d="M17 6L22 3 24 12 19 11ZM28 3L34 2 33 9 29 10Z" fill="#4a6f98" />
        <path d="M24 3L28 5 27 10 24 9Z" fill="#c28a3d" />
      </Chrome>
    ),
  },
  {
    name: "Eclipse",
    running: true,
    icon: (
      <Svg>
        <path d="M0 0H30V30H0Z" fill="#4b2f72" />
        <path d="M0 0H30V12H0Z" fill="#5b4872" />
        <circle cx="15" cy="15" r="11" fill="#2a2030" stroke="#d7d6da" strokeWidth="2" />
        <circle cx="15" cy="15" r="13" fill="none" stroke="#d7d6da" strokeWidth="2.500" strokeDasharray="3.500 3.300" />
        <g fontFamily="Liberation Sans, sans-serif" fontWeight="700" fill="#f59140" stroke="#2a1a20" strokeWidth="1" paintOrder="stroke" textAnchor="middle">
          <text x="15" y="14" fontSize="8">Java EE</text>
          <text x="15" y="22" fontSize="9">IDE</text>
        </g>
      </Svg>
    ),
  },
  {
    name: "Google Chrome, profile S",
    running: true,
    icon: (
      <Chrome>
        <circle cx="22.500" cy="7.500" r="7.500" fill="#a443b8" />
        <text x="22.500" y="11" fontSize="9" textAnchor="middle" fill="#f2dcf6" fontFamily="Roboto, sans-serif">S</text>
      </Chrome>
    ),
  },
  {
    name: "MySQL Workbench",
    running: true,
    icon: (
      <Svg>
        <defs>
          <linearGradient id="sql" x1="0" y1="0" x2="0" y2="1">
            <stop offset="0" stopColor="#3478a6" />
            <stop offset="1" stopColor="#1f5478" />
          </linearGradient>
        </defs>
        <rect x=".5" y="1" width="29" height="28.500" rx="2.500" fill="url(#sql)" />
        <path d="M5 5Q10 4 13 9 15 14 18 16 22 19 22 22L27 25M22 22L22 24 26 26M5 5Q4 8 7 11 8 14 7 17 9 20 9 16 11 17 12 19" fill="none" stroke="#d7e4ed" strokeWidth="1.100" />
        <path d="M21 4L26 8" stroke="#fff" strokeWidth="2" fill="none" />
        <path d="M20 2.500L23 3V6L20 5.500ZM24 6L27 7V9.500L25 9Z" fill="#fff" />
      </Svg>
    ),
  },
  {
    name: "GitHub Desktop",
    running: true,
    icon: (
      <span className="flex h-7 w-7 items-center justify-center rounded-full bg-[#7b2fa8]">
        <FaGithub className="h-[22px] w-[22px] text-white" />
      </span>
    ),
  },
  {
    name: "Command Prompt",
    running: true,
    icon: (
      <Svg>
        <path d="M0 4H30V26H0Z" fill="#444" />
        <path d="M0 4H10V8H0Z" fill="#cfcfcf" />
        <path d="M10 4H20V8H10Z" fill="#a2a2a2" />
        <path d="M20 4H30V8H20Z" fill="#727272" />
        <path d="M5 12L10 17 5 22" stroke="#d8d8d8" strokeWidth="3" fill="none" />
        <path d="M13 20H23V23H13Z" fill="#efefef" />
      </Svg>
    ),
  },
];

function Cloud({ back, front }: { back: string; front: string }) {
  return (
    <svg viewBox="0 0 20 14" className="h-[14px] w-5" aria-hidden="true">
      <path d="M3.500 13A4 4 0 0 1 3.500 5Q5.500 1 9.500 1 13.500 1 15 4.500 20 5.500 19.800 9.500 19.500 13 16 13Z" fill={back} />
      <path d="M1 12L9 7.500Q10 7 11.500 8L19 12Q17.500 13.500 16 13.500H4Q2 13.500 1 12ZM13 7.500Q14.500 6 17 6.300 20 7.500 19.800 10.500L18.500 12Z" fill={front} />
    </svg>
  );
}

function Taskbar() {
  return (
    <footer className="flex h-[59px] w-full overflow-hidden border-t border-[#444] bg-[#202020] pl-[129px]">
      <nav aria-label="Taskbar" className="flex">
        {apps.map((a) => (
          <button key={a.name} type="button" aria-label={a.name} className="relative flex w-[55px] shrink-0 items-center justify-center">
            {a.active && (
              <>
                <span className="absolute left-2 top-1 h-[50px] w-[45px] rounded-md border border-[#333] bg-[#282828]" />
                <span className="absolute left-[3px] top-1 h-[50px] w-11 rounded-md border border-[#3a3a3a] bg-[#2d2d2d]" />
              </>
            )}
            <span className="relative">{a.icon}</span>
            {a.running && <span className="absolute bottom-[5px] h-1 w-2 rounded-full bg-[#9a9a9a]" />}
            {a.active && <span className="absolute bottom-[5px] h-1 w-5 rounded-full bg-[#4cc2ff]" />}
            {a.badge && (
              <span
                className={
                  "absolute top-2 flex h-5 items-center justify-center rounded-full bg-[#4cc2ff] font-['Open_Sans',sans-serif] text-[13px] leading-5 text-black " +
                  (a.badge === "1" ? "right-[6px] w-5" : "left-[21px] w-[34px]")
                }
              >
                {a.badge}
              </span>
            )}
          </button>
        ))}
      </nav>
      <div className="ml-auto flex shrink-0 items-center text-white">
        <button type="button" aria-label="Show hidden icons" className="flex w-10 justify-center">
          <svg viewBox="0 0 14 9" className="h-[9px] w-[14px]" aria-hidden="true">
            <path d="M1 8L7 2 13 8" fill="none" stroke="#fff" strokeWidth="2" />
          </svg>
        </button>
        <button type="button" aria-label="OneDrive personal" className="flex w-10 justify-center">
          <Cloud back="#a9a9a9" front="#fafafa" />
        </button>
        <button type="button" aria-label="OneDrive work" className="flex w-10 justify-center">
          <Cloud back="#0a64b8" front="#28a8ea" />
        </button>
        <button type="button" aria-label="Touch keyboard" className="flex w-10 justify-center">
          <svg viewBox="0 0 20 15" className="h-[15px] w-5" aria-hidden="true">
            <rect x="1" y="1" width="18" height="13" rx="1.500" fill="none" stroke="#fff" strokeWidth="1.500" />
            <path d="M4 4.500H16M5 7.500H16" stroke="#fff" strokeWidth="1.700" strokeDasharray="1.700 1.400" />
            <path d="M4 10.500H5.500M7 10.500H13M14.500 10.500H16" stroke="#fff" strokeWidth="1.700" />
          </svg>
        </button>
        <span className="w-[22px] self-start overflow-hidden pl-[13px] pt-[10px] font-['Open_Sans',sans-serif] text-sm leading-5">E</span>
      </div>
    </footer>
  );
}

function StopField({ id, label }: { id: string; label: string }) {
  return (
    <div className="flex flex-col">
      <label htmlFor={id} className="text-[13px] leading-5 text-[#d3d8da]">{label}</label>
      <input id={id} type="text" className="h-[37px] w-full rounded-lg bg-white px-3 text-[13px] text-gray-800 outline-none" />
    </div>
  );
}

export default function App() {
  return (
    <div className="flex min-h-screen flex-col overflow-hidden bg-linear-135 from-[#0f2027] via-[#203a43] to-[#2c5364] font-[Poppins,Inter,sans-serif]">
      <header className="h-3 border-b border-[#43504a] bg-[#323e2d]" />
      <main className="flex grow flex-col px-4 pb-2 pr-[31px] pt-0.5">
        <section className="mx-auto w-full max-w-[1080px] rounded-2xl border border-white/20 bg-white/8 px-[25px] py-6 shadow-[0_8px_32px_rgba(0,0,0,0.3)]">
          <h1 className="flex items-center gap-3 text-[23px] leading-[30px] text-white">
            Welcome, 1234 <WavingHand />
          </h1>
          <div role="alert" className="mt-3 h-[49px] rounded border border-[#ffecb5] bg-[#fff3cd] px-[13px] text-[13px] leading-[46px] text-[#664d03]">
            No driver assigned yet. Please select pickup and drop stops below.
          </div>

          <div className="relative mt-5 h-[333px] overflow-hidden rounded-xl">
            <CityMap />
            <div className="absolute left-2 top-2 flex w-[27px] flex-col overflow-hidden rounded border border-black/25 bg-white text-black">
              <button type="button" aria-label="Zoom in" className="flex h-[25px] items-center justify-center border-b border-[#ccc]">
                <svg viewBox="0 0 12 12" className="h-3 w-3" aria-hidden="true"><path d="M1 6H11M6 1V11" stroke="#000" strokeWidth="2" /></svg>
              </button>
              <button type="button" aria-label="Zoom out" className="flex h-[25px] items-center justify-center">
                <svg viewBox="0 0 12 12" className="h-3 w-3" aria-hidden="true"><path d="M1 6H11" stroke="#000" strokeWidth="2" /></svg>
              </button>
            </div>
            <div className="absolute inset-x-0 top-[89px] flex flex-col items-center">
              <div className="relative flex h-[38px] w-[111px] items-center justify-center rounded-[10px] bg-white font-['Liberation_Sans',sans-serif] text-[11px] text-[#333] shadow-[0_3px_14px_rgba(0,0,0,0.4)]">
                Driver Location
                <button type="button" aria-label="Close" className="absolute right-[6px] top-[6px] h-2 w-2">
                  <svg viewBox="0 0 8 8" className="h-2 w-2" aria-hidden="true"><path d="M.5.5L7.500 7.500M7.500.5L.5 7.500" stroke="#757575" strokeWidth="1.100" /></svg>
                </button>
              </div>
              <svg viewBox="0 0 18 8" className="relative z-10 h-2 w-[18px]" aria-hidden="true"><path d="M0 0H18L9 8Z" fill="#fff" /></svg>
              <div className="-mt-1"><Marker /></div>
            </div>
          </div>

          <section className="mt-5 h-[122px] rounded-2xl border border-white/20 bg-white/15 px-[13px] pt-3 text-white shadow-[0_8px_32px_rgba(0,0,0,0.3)]">
            <h2 className="flex items-center gap-[5px] text-[17px] leading-5">
              <FaIdBadge className="h-[18px] w-[14px]" /> Driver Contact Info
            </h2>
            <p className="mt-2 text-[13px] leading-5"><strong className="font-bold">Name:</strong> Loading...</p>
            <p className="mt-[13px] text-[13px] leading-5"><strong className="font-bold">Phone:</strong> Loading...</p>
          </section>

          <form className="mt-[29px] flex flex-col gap-5" onSubmit={(e) => e.preventDefault()}>
            <StopField id="pickup" label="Pickup Stop:" />
            <StopField id="drop" label="Drop Stop:" />
            <button type="submit" className="h-10 w-[82px] rounded-[10px] bg-[#43cea2] text-[13px] font-bold text-white">Submit</button>
          </form>
        </section>
      </main>
      <Taskbar />
    </div>
  );
}
